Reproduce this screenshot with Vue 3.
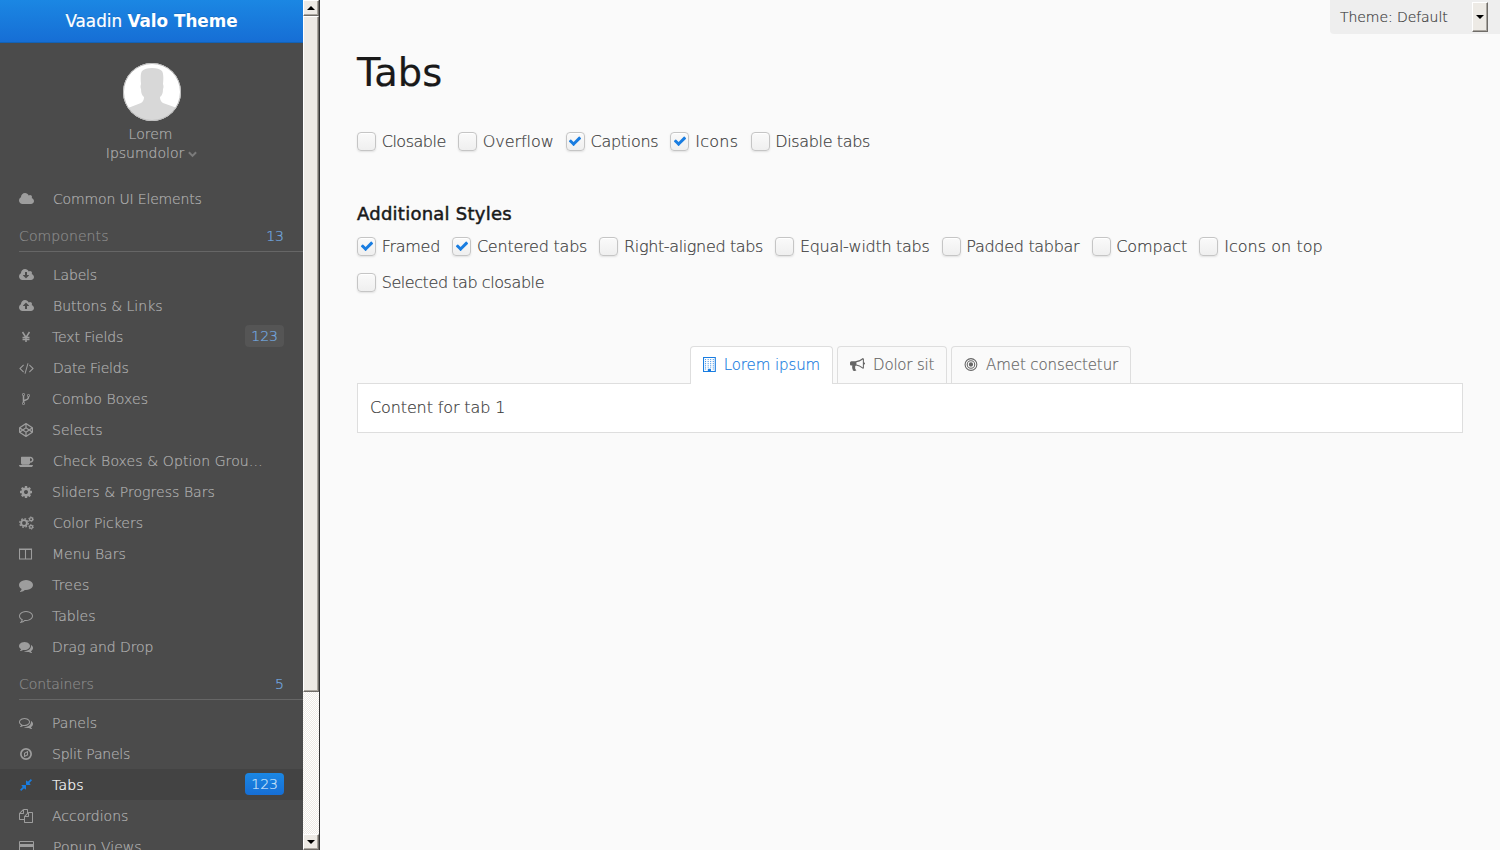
<script setup>
const cloud = 'M1984 1152q0 159-112.5 271.5t-271.5 112.5h-1088q-185 0-316.5-131.5t-131.5-316.5q0-132 71-241.5t187-163.5q-2-28-2-43 0-212 150-362t362-150q158 0 286.5 88t187.5 230q70-62 166-62 106 0 181 75t75 181q0 75-41 138 129 30 213 134.5t84 239.5z'
const icons = {
  cloud: { x: 64, w: 15, d: cloud },
  cloudDown: { x: 64, w: 15, d: cloud + 'M1344 928q0-14-9-23t-23-9h-224v-352q0-13-9.5-22.5t-22.5-9.5h-192q-13 0-22.5 9.5t-9.5 22.5v352h-224q-13 0-22.5 9.5t-9.5 22.5q0 14 9 23l352 352q9 9 23 9t23-9l351-351q10-12 10-24z' },
  cloudUp: { x: 64, w: 15, d: cloud + 'M1344 864q0-14-9-23l-352-352q-9-9-23-9t-23 9l-351 351q-10 12-10 24 0 14 9 23t23 9h224v352q0 13 9.5 22.5t22.5 9.5h192q13 0 22.5-9.5t9.5-22.5v-352h224q13 0 22.5-9.5t9.5-22.5z' },
  yen: { x: 0, w: 14, s: 'M450 256L896 960L1342 256M896 900V1536M450 960H1342M450 1210H1342', sw: [190, 190] },
  code: { x: 64, w: 15, d: 'M681 1399l-50 50q-10 10-23 10t-23-10l-466-466q-10-10-10-23t10-23l466-466q10-10 23-10t23 10l50 50q10 10 10 23t-10 23l-393 393 393 393q10 10 10 23t-10 23zm591-1067l-373 1291q-4 13-15.5 19.5t-23.5 2.5l-62-17q-13-4-19.5-15.5t-2.5-24.5l373-1291q4-13 15.5-19.5t23.5-2.5l62 17q13 4 19.5 15.5t2.5 24.5zm657 651l-466 466q-10 10-23 10t-23-10l-50-50q-10-10-10-23t10-23l393-393-393-393q-10-10-10-23t10-23l50-50q10-10 23-10t23 10l466 466q10 10 10 23t-10 23z' },
  fork: { x: 0, w: 14, d: 'M672 1472q0-40-28-68t-68-28-68 28-28 68 28 68 68 28 68-28 28-68zm0-1152q0-40-28-68t-68-28-68 28-28 68 28 68 68 28 68-28 28-68zm640 128q0-40-28-68t-68-28-68 28-28 68 28 68 68 28 68-28 28-68zm96 0q0 52-26 96.5t-70 69.5q-2 287-226 414-67 38-203 81-128 40-169.5 71t-41.5 100v26q44 25 70 69.5t26 96.5q0 80-56 136t-136 56-136-56-56-136q0-52 26-96.5t70-69.5v-820q-44-25-70-69.5t-26-96.5q0-80 56-136t136-56 136 56 56 136q0 52-26 96.5t-70 69.5v497q54-26 154-57 55-17 87.5-29.5t70.5-31 59-39.5 40.5-51 28-69.5 8.5-91.5q-44-25-70-69.5t-26-96.5q0-80 56-136t136-56 136 56 56 136z' },
  codepen: { x: 0, w: 14, d: 'M216 1169l603 402v-359l-334-223zm-62-144l193-129-193-129v258zm819 546l603-402-269-180-334 223v359zm-77-493l272-182-272-182-272 182zm-411-275l334-223v-359l-603 402zm960 93l193 129v-258zm-138-93l269-180-603-402v359zm485-180v546q0 41-34 64l-819 546q-21 13-43 13t-43-13l-819-546q-34-23-34-64v-546q0-41 34-64l819-546q21-13 43-13t43 13l819 546q34 23 34 64z' },
  coffee: { x: 64, w: 15, d: 'M1728 736q0-80-56-136t-136-56h-64v384h64q80 0 136-56t56-136zm-1664 672h1792q0 106-75 181t-181 75h-1280q-106 0-181-75t-75-181zm1856-672q0 159-112.5 271.5t-271.5 112.5h-64v32q0 92-66 158t-158 66h-704q-92 0-158-66t-66-158v-736q0-26 19-45t45-19h1152q159 0 271.5 112.5t112.5 271.5z' },
  cog: { x: 0, w: 14, d: 'M1152 896q0-106-75-181t-181-75-181 75-75 181 75 181 181 75 181-75 75-181zm512-109v222q0 12-8 23t-20 13l-185 28q-19 54-39 91 35 50 107 138 10 12 10 25t-9 23q-27 37-99 108t-94 71q-12 0-26-9l-138-108q-44 23-91 38-16 136-29 186-7 28-36 28h-222q-14 0-24.5-8.5t-11.5-21.5l-28-184q-49-16-90-37l-141 107q-10 9-25 9-14 0-25-11-126-114-165-168-7-10-7-23 0-12 8-23 15-21 51-66.5t54-70.5q-27-50-41-99l-183-27q-13-2-21-12.5t-8-23.5v-222q0-12 8-23t19-13l186-28q14-46 39-92-40-57-107-138-10-12-10-24 0-10 9-23 26-36 98.5-107.5t94.5-71.5q13 0 26 10l138 107q44-23 91-38 16-136 29-186 7-28 36-28h222q14 0 24.5 8.5t11.5 21.5l28 184q49 16 90 37l142-107q9-9 24-9 13 0 25 10 129 119 165 170 7 8 7 22 0 12-8 23-15 21-51 66.5t-54 70.5q26 50 41 98l183 28q13 2 21 12.5t8 23.5z' },
  cogs: { x: 0, w: 15, rings: [[640, 896, 370, 240], [640, 896, 550, 160, '216 216'], [1550, 410, 200, 170], [1550, 410, 310, 110, '162 162'], [1550, 1390, 200, 170], [1550, 1390, 310, 110, '162 162']] },
  columns: { x: 0, w: 14, s: 'M64 256H1600V1536H64ZM832 256V1536M64 320H1600', sw: [140, 140] },
  comment: { x: 0, w: 14, d: 'M1792 896q0 174-120 321.5t-326 233-450 85.5q-70 0-145-8-198 175-460 242-49 14-114 22-17 2-30.5-9t-17.5-29v-1q-3-4-.5-12t2-10 4.5-9.5l6-9 7-8.5 8-9q7-8 31-34.5t34.5-38 31-39.5 32.5-51 27-59 26-76q-157-89-247.5-220t-90.5-281q0-130 71-248.5t191-204.5 286-136.5 348-50.5q244 0 450 85.5t326 233 120 321.5z' },
  commentO: { x: 0, w: 14, d: 'M896 384q-204 0-381.5 69.5t-282 187.5-104.5 255q0 112 71.5 213.5t201.5 175.5l87 50-27 96q-24 91-70 172 152-63 275-171l43-38 57 6q69 8 130 8 204 0 381.5-69.5t282-187.5 104.5-255-104.5-255-282-187.5-381.5-69.5zm896 512q0 174-120 321.5t-326 233-450 85.5q-70 0-145-8-198 175-460 242-49 14-114 22h-5q-15 0-27-10.5t-16-27.5v-1q-3-4-.5-12t2-10 4.5-9.5l6-9 7-8.5 8-9q7-8 31-34.5t34.5-38 31-39.5 32.5-51 27-59 26-76q-157-89-247.5-220t-90.5-281q0-174 120-321.5t326-233 450-85.5 450 85.5 326 233 120 321.5z' },
  comments: { x: 0, w: 14, d: 'M1408 768q0 139-94 257t-256.5 186.5-353.5 68.5q-86 0-176-16-124 88-278 128-36 9-86 16h-3q-11 0-20.5-8t-11.5-21q-1-3-1-6.5t.5-6.5 2-6l2.5-5 3.5-5.5 4-5 4.5-5 4-4.5q5-6 23-25t26-29.5 22.5-29 25-38.5 20.5-44q-124-72-195-177t-71-224q0-139 94-257t256.5-186.5 353.5-68.5 353.5 68.5 256.5 186.5 94 257zm384 256q0 120-71 224.5t-195 176.5q10 24 20.5 44t25 38.5 22.5 29 26 29.5 23 25q1 1 4 4.5t4.5 5 4 5 3.5 5.5l2.5 5 2 6 .5 6.5-1 6.5q-3 14-13 22t-22 7q-50-7-86-16-154-40-278-128-90 16-176 16-271 0-472-132 58 4 88 4 161 0 309-45t264-129q125-92 192-212t67-254q0-77-23-152 129 71 204 178t75 230z' },
  commentsO: { x: 0, w: 14, d: 'M704 384q-153 0-286 52t-211.5 141-78.5 191q0 82 53 158t149 132l97 56-35 84q34-20 62-39l44-31 53 10q78 14 153 14 153 0 286-52t211.5-141 78.5-191-78.5-191-211.5-141-286-52zm0-128q191 0 353.5 68.5t256.5 186.5 94 257-94 257-256.5 186.5-353.5 68.5q-86 0-176-16-124 88-278 128-36 9-86 16h-3q-11 0-20.5-8t-11.5-21q-1-3-1-6.5t.5-6.5 2-6l2.5-5 3.5-5.5 4-5 4.5-5 4-4.5q5-6 23-25t26-29.5 22.5-29 25-38.5 20.5-44q-124-72-195-177t-71-224q0-139 94-257t256.5-186.5 353.5-68.5zm822 1169q10 24 20.5 44t25 38.5 22.5 29 26 29.5 23 25q1 1 4 4.5t4.5 5 4 5 3.5 5.5l2.5 5 2 6 .5 6.5-1 6.5q-3 14-13 22t-22 7q-50-7-86-16-154-40-278-128-90 16-176 16-271 0-472-132 58 4 88 4 161 0 309-45t264-129q125-92 192-212t67-254q0-77-23-152 129 71 204 178t75 230q0 120-71 224.5t-195 176.5z' },
  compass: { x: 0, w: 14, rings: [[896, 896, 656, 220]], d: 'M1152 480v560l-512 272v-560zM1024 700l-256 130v260l256-130z' },
  compress: { x: 0, w: 14, d: 'M896 960v448q0 26-19 45t-45 19-45-19l-144-144-332 332q-10 10-23 10t-23-10l-114-114q-10-10-10-23t10-23l332-332-144-144q-19-19-19-45t19-45 45-19h448q26 0 45 19t19 45zm755-672q0 13-10 23l-332 332 144 144q19 19 19 45t-19 45-45 19h-448q-26 0-45-19t-19-45v-448q0-26 19-45t45-19 45 19l144 144 332-332q10-10 23-10t23 10l114 114q10 10 10 23z' },
  copy: { x: 0, w: 14, d: 'M1696 384q40 0 68 28t28 68v1216q0 40-28 68t-68 28h-960q-40 0-68-28t-28-68v-288h-544q-40 0-68-28t-28-68v-672q0-40 20-88t48-76l408-408q28-28 76-48t88-20h416q40 0 68 28t28 68v328q68-40 128-40h416zm-544 213l-299 299h299v-299zm-640-384l-299 299h299v-299zm196 647l316-316v-416h-384v416q0 40-28 68t-68 28h-416v640h512v-256q0-40 20-88t48-76zm956 804v-1152h-384v416q0 40-28 68t-68 28h-416v640h896z' },
  card: { x: 0, w: 15, s: 'M64 192H1856V1600H64Z', sw: [128, 128], d: 'M64 512H1856V896H64Z' },
  building: { x: 0, w: 12, s: 'M64 64H1472V1728H64Z', sw: [128, 128], d: 'M576 1408h384v384h-384z', dots: true },
  bullhorn: { x: 0, w: 14, d: 'M1664 640q53 0 90.5 37.5t37.5 90.5-37.5 90.5-90.5 37.5v384q0 52-38 90t-90 38q-417-347-812-380-58 19-91 66t-31 100.5 40 92.5q-20 33-23 65.5t6 58 33.5 55 48 50 61.5 50.5q-29 58-111.5 83t-168.5 11.5-132-55.5q-7-23-29.5-87.5t-32-94.5-23-89-15-101 3.5-98.5 22-110.5h-122q-66 0-113-47t-47-113v-192q0-66 47-113t113-47h480q435 0 896-384 52 0 90 38t38 90v384zm-128 604v-954q-394 302-768 343v270q377 42 768 341z' },
  bullseye: { x: 0, w: 13, rings: [[832, 896, 704, 128], [832, 896, 448, 128], [832, 896, 128, 256]] },
  check: { x: 0, w: 14, d: 'M1671 566q0 40-28 68l-724 724-136 136q-28 28-68 28t-68-28l-136-136-362-362q-28-28-28-68t28-68l136-136q28-28 68-28t68 28l294 295 656-657q28-28 68-28t68 28l136 136q28 28 28 68z' },
}

// track: letter spacing of the caption, in pixels
const menu = [
  { icon: 'cloud', text: 'Common UI Elements', track: -0.16 },
  { title: 'Components', count: 13, track: 0.1 },
  { icon: 'cloudDown', text: 'Labels', track: -0.2 },
  { icon: 'cloudUp', text: 'Buttons & Links', track: 0 },
  { icon: 'yen', text: 'Text Fields', badge: '123', track: -0.1 },
  { icon: 'code', text: 'Date Fields', track: -0.17 },
  { icon: 'fork', text: 'Combo Boxes', track: 0.1 },
  { icon: 'codepen', text: 'Selects', track: 0 },
  { icon: 'coffee', text: 'Check Boxes & Option Grou…', track: 0.1 },
  { icon: 'cog', text: 'Sliders & Progress Bars', track: 0.06 },
  { icon: 'cogs', text: 'Color Pickers', track: 0 },
  { icon: 'columns', text: 'Menu Bars', track: 0 },
  { icon: 'comment', text: 'Trees', track: 0.2 },
  { icon: 'commentO', text: 'Tables', track: 0 },
  { icon: 'comments', text: 'Drag and Drop', track: -0.08 },
  { title: 'Containers', count: 5, track: -0.1 },
  { icon: 'commentsO', text: 'Panels', track: 0 },
  { icon: 'compass', text: 'Split Panels', track: -0.2 },
  { icon: 'compress', text: 'Tabs', badge: '123', selected: true, track: 0.2 },
  { icon: 'copy', text: 'Accordions', track: 0 },
  { icon: 'card', text: 'Popup Views', track: 0.05 },
]
const options = [
  { text: 'Closable', track: -0.48 },
  { text: 'Overflow', track: -0.06 },
  { text: 'Captions', on: true, track: -0.3 },
  { text: 'Icons', on: true, track: 0.3 },
  { text: 'Disable tabs', track: -0.36 },
]
const styles = [
  { text: 'Framed', on: true, track: -0.28 },
  { text: 'Centered tabs', on: true, track: -0.22 },
  { text: 'Right-aligned tabs', track: -0.36 },
  { text: 'Equal-width tabs', track: -0.29 },
  { text: 'Padded tabbar', track: -0.3 },
  { text: 'Compact', track: -0.08 },
  { text: 'Icons on top', track: 0.04 },
  { text: 'Selected tab closable', track: -0.43 },
]
const tabs = [
  { icon: 'building', text: 'Lorem ipsum', selected: true, track: -0.09 },
  { icon: 'bullhorn', text: 'Dolor sit', track: -0.2 },
  { icon: 'bullseye', text: 'Amet consectetur', track: -0.1 },
]
const dots = []
for (let r = 0; r < 6; r++) for (let c = 0; c < 4; c++) if (r < 5 || c === 0 || c === 3) dots.push([256 + c * 305, 256 + r * 225])
const box = (i) => `${i.x} 0 ${i.w * 128} 1792`
const tracking = (t) => ({ letterSpacing: t.track + 'px' })
</script>

<template>
  <div class="app">
    <aside class="side">
      <div class="menu">
        <header class="brand"><span>Vaadin <b>Valo Theme</b></span></header>
        <div class="user">
          <svg class="avatar" width="58" height="58" viewBox="0 0 58 58">
            <defs><clipPath id="round"><circle cx="29" cy="29" r="28.5" /></clipPath></defs>
            <circle cx="29" cy="29" r="29" fill="#fff" />
            <path clip-path="url(#round)" fill="#d8d8d8" d="M21 34q-3-2-3-8-1-2 0-5-1-10 1-13 3-3 10-3t10 3q2 3 1 13 1 3 0 5 0 6-3 8 0 4 3 6l14 5 5 4v10H-1V49l6-4 13-5q3-2 3-6z" />
            <circle cx="29" cy="29" r="28.5" fill="none" stroke="#bbb" />
          </svg>
          <span>Lorem</span>
          <span class="last">Ipsumdolor<svg class="chev" width="9" height="7" viewBox="0 0 9 7"><path d="M.9 1.3L4.5 4.9L8.1 1.3" /></svg></span>
        </div>
        <nav>
          <template v-for="m in menu" :key="m.text || m.title">
            <div v-if="m.title" class="subtitle"><span :style="tracking(m)">{{ m.title }}</span><span class="count">{{ m.count }}</span></div>
            <div v-else class="item" :class="{ selected: m.selected }">
              <svg class="ico" :width="icons[m.icon].w" height="14" :viewBox="box(icons[m.icon])">
                <path v-if="icons[m.icon].d" :d="icons[m.icon].d" fill-rule="evenodd" fill="currentColor" />
                <path v-if="icons[m.icon].s" :d="icons[m.icon].s" fill="none" stroke="currentColor" :stroke-width="icons[m.icon].sw[0]" />
                <circle v-for="(r, i) in icons[m.icon].rings || []" :key="i" :cx="r[0]" :cy="r[1]" :r="r[2]" fill="none" stroke="currentColor" :stroke-width="r[3]" :stroke-dasharray="r[4]" />
              </svg>
              <span :style="tracking(m)">{{ m.text }}</span>
              <span v-if="m.badge" class="badge">{{ m.badge }}</span>
            </div>
          </template>
        </nav>
      </div>
      <div class="scroll">
        <div class="btn"><i class="up"></i></div>
        <div class="thumb"></div>
        <div class="track"></div>
        <div class="btn"><i class="down"></i></div>
      </div>
    </aside>
    <main>
      <div class="theme"><span>Theme: Default</span><div class="drop"><i class="down"></i></div></div>
      <h1>Tabs</h1>
      <div class="checks first">
        <label v-for="o in options" :key="o.text"><span class="cb"><svg v-if="o.on" width="14" height="14" viewBox="0 0 1792 1792"><path :d="icons.check.d" /></svg></span><span class="cap" :style="tracking(o)">{{ o.text }}</span></label>
      </div>
      <h3>Additional Styles</h3>
      <div class="checks">
        <label v-for="o in styles" :key="o.text"><span class="cb"><svg v-if="o.on" width="14" height="14" viewBox="0 0 1792 1792"><path :d="icons.check.d" /></svg></span><span class="cap" :style="tracking(o)">{{ o.text }}</span></label>
      </div>
      <div class="sheet">
        <div class="tabbar">
          <div v-for="t in tabs" :key="t.text" class="tab" :class="{ selected: t.selected }">
            <svg :width="icons[t.icon].w * 15 / 14" height="15" :viewBox="box(icons[t.icon])">
              <path :d="icons[t.icon].d" fill-rule="evenodd" fill="currentColor" />
              <path v-if="icons[t.icon].s" :d="icons[t.icon].s" fill="none" stroke="currentColor" stroke-width="128" />
              <template v-if="icons[t.icon].dots"><rect v-for="(p, i) in dots" :key="i" :x="p[0]" :y="p[1]" width="110" height="110" fill="currentColor" /></template>
              <circle v-for="(r, i) in icons[t.icon].rings || []" :key="i" :cx="r[0]" :cy="r[1]" :r="r[2]" fill="none" stroke="currentColor" :stroke-width="r[3]" />
            </svg>
            <span :style="tracking(t)">{{ t.text }}</span>
          </div>
        </div>
        <div class="content">Content for tab 1</div>
      </div>
    </main>
  </div>
</template>

<style>
html, body { background: #fafafa; overflow: hidden; }
</style>

<style scoped>
.app { display: flex; height: 850px; overflow: hidden; font: 300 16px/1.55 "DejaVu Sans", sans-serif; color: #3c3c3c; background: #fafafa; -webkit-text-stroke: .2px currentColor; }
.side { display: flex; width: 320px; flex: none; background: #4b4b4b; }
.menu { width: 303px; height: 850px; overflow: hidden; font-size: 14px; color: #b0b0b0; }
.brand { box-sizing: border-box; height: 43px; border-bottom: 1px solid #1362b5; background: linear-gradient(#1b87e3, #166ed5); color: #fff; font-weight: 400; font-size: 16.8px; line-height: 43px; text-align: center; text-shadow: 0 -1px 0 rgba(0,0,0,.12); white-space: nowrap; }
.brand b { font-weight: 700; -webkit-text-stroke: 0; }
.user { display: flex; flex-direction: column; align-items: center; padding-top: 20px; height: 120px; line-height: 19px; }
.user span { margin-right: 2px; margin-top: 4px; }
.user .last { margin: 0; }
.avatar { flex: none; margin-left: 1px; }
.chev { margin-left: 4px; fill: none; stroke: #7b7b7b; stroke-width: 2; }
.item { box-sizing: border-box; display: flex; align-items: center; height: 31px; padding: 2px 19px 0; line-height: 29px; white-space: nowrap; }
.item.selected { background: #434343; color: #fff; }
.ico { flex: none; margin-right: 19px; margin-top: -1px; color: #9d9d9d; }
.selected .ico { color: #197de1; }
.badge { margin-left: auto; height: 22px; line-height: 22px; padding: 0 6px; border-radius: 4px; background: #555; color: #74abe2; margin-top: -3px; }
.selected .badge { background: linear-gradient(#1b87e3, #166ed5); color: #d0e5fa; }
.subtitle { display: flex; justify-content: space-between; margin: 7px 0 7px 19px; padding-right: 19px; height: 30px; line-height: 31px; border-bottom: 1px solid #666; color: #8a8a8a; }
.count { color: #74abe2; }
.scroll { display: flex; flex-direction: column; width: 16px; height: 850px; border-right: 1px solid #333; }
.btn, .thumb, .drop { box-sizing: border-box; background: #edeae5; border: 1px solid; border-color: #fff #6f6c68 #6f6c68 #fff; box-shadow: inset -1px -1px #aaa69f; }
.btn { height: 16px; display: flex; align-items: center; justify-content: center; }
.thumb { height: 676px; }
.track { flex: 1; background: repeating-conic-gradient(#fff 0 25%, #edeae5 0 50%) 0 0 / 2px 2px; }
.up, .down { width: 0; height: 0; border: 4px solid transparent; }
.up { border-top: 0; border-bottom-color: #000; }
.down { border-bottom: 0; border-top-color: #000; }
main { flex: 1; min-width: 0; padding: 0 37px; position: relative; }
.theme { position: absolute; right: 0; top: 0; width: 170px; height: 34px; box-sizing: border-box; padding: 0 12px 0 10px; border-radius: 0 0 0 4px; background: #eee; display: flex; align-items: center; justify-content: space-between; font-size: 14px; letter-spacing: -.07px; }
.theme span { padding-top: 1px; }
.drop { width: 16px; height: 30px; display: flex; align-items: center; justify-content: center; }
h1 { margin: 47px 0 0; font-weight: 400; font-size: 38.4px; line-height: 52px; letter-spacing: .1px; color: #191919; }
h3 { margin: 41px 0 0; font-weight: 400; font-size: 18px; line-height: 26px; letter-spacing: .25px; color: #191919; -webkit-text-stroke: .5px currentColor; }
.checks { display: flex; flex-wrap: wrap; column-gap: 12.2px; row-gap: 0; }
.checks.first { padding: 24px 0 1px; }
h3 + .checks { padding-top: 1px; }
label { display: flex; align-items: center; height: 36px; white-space: nowrap; }
.cap { padding-top: 2px; }
.cb { box-sizing: border-box; width: 19px; height: 19px; margin-right: 5.7px; border: 1px solid #c5c5c5; border-radius: 4px; background: linear-gradient(#fafafa, #efefef); box-shadow: 0 1px 2px rgba(0,0,0,.1), inset 0 1px 0 #fff; display: flex; align-items: center; justify-content: center; }
.cb svg { fill: #197de1; }
.sheet { margin-top: 46px; }
.tabbar { display: flex; justify-content: center; gap: 4px; padding-left: 1px; }
.tab { display: flex; align-items: center; height: 36px; padding: 0 12px; border: 1px solid #dedede; border-bottom: 0; border-radius: 4px 4px 0 0; font-size: 15px; color: #666; white-space: nowrap; }
.tab svg { margin-right: 8px; margin-top: -2px; }
.tab span { padding-top: 1px; }
.tab.selected { color: #197de1; background: #fff; margin-bottom: -1px; height: 36px; padding-bottom: 1px; position: relative; }
.content { height: 48px; border: 1px solid #dedede; background: #fff; padding-left: 12px; line-height: 47px; letter-spacing: -.12px; }
</style>
